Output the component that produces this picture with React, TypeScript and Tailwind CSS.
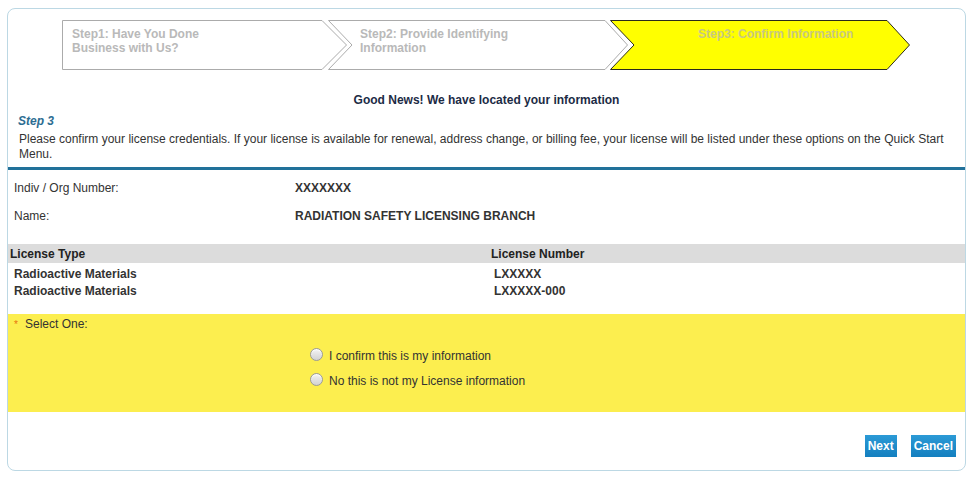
import React from "react";

type Step = {
  label: string[];
  first?: boolean;
  active?: boolean;
  textLeft: string;
  className: string;
};

const steps: Step[] = [
  { label: ["Step1: Have You Done", "Business with Us?"], first: true, textLeft: "pl-[10px]", className: "w-[286px]" },
  { label: ["Step2: Provide Identifying", "Information"], textLeft: "pl-[32px]", className: "w-[301px] -ml-[20px]" },
  { label: ["Step3: Confirm Information"], active: true, textLeft: "pl-[88px]", className: "w-[301px] -ml-[19px]" },
];

function StepShape({ first, active }: { first?: boolean; active?: boolean }) {
  const pts = first
    ? "0.5,0.5 260,0.5 284.5,25 260,49.5 0.5,49.5"
    : "0.5,0.5 277,0.5 299.5,25 277,49.5 0.5,49.5 24,25";
  return (
    <svg className="absolute inset-0" width={first ? 286 : 301} height={51} viewBox={`0 0 ${first ? 286 : 301} 51`}>
      <polygon
        points={pts}
        fill={active ? "#ffff00" : "#ffffff"}
        stroke={active ? "#2b2b1a" : "#ababab"}
        strokeWidth={1}
      />
    </svg>
  );
}

function Radio() {
  return (
    <span className="inline-block w-[13px] h-[13px] rounded-full border border-[#9a9a9a] bg-gradient-to-b from-[#f4f4f4] to-[#d2d2d2] shadow-[inset_0_1px_1px_rgba(255,255,255,0.9)]" />
  );
}

export default function App() {
  return (
    <div className="min-h-[479px] bg-white pt-[8px] pl-[7px] text-[12px] text-[#333] font-['Liberation_Sans',Arial,sans-serif]">
      <div className="w-[959px] h-[463px] border border-[#bcd8e4] rounded-[8px] flex flex-col">
        {/* wizard steps */}
        <div className="flex mt-[11px] ml-[54px] h-[51px]">
          {steps.map((s, i) => (
            <div key={i} className={`relative h-[51px] ${s.className}`}>
              <StepShape first={s.first} active={s.active} />
              <div
                className={`relative pt-[7px] ${s.textLeft} font-bold leading-[14px] ${
                  s.active ? "text-[#c8c882]" : "text-[#b9b9b9]"
                }`}
              >
                {s.label.map((l) => (
                  <div key={l}>{l}</div>
                ))}
              </div>
            </div>
          ))}
        </div>

        <p className="mt-[22px] text-center font-bold leading-[15px] text-[#1c2b45]">
          Good News! We have located your information
        </p>

        <p className="mt-[6px] ml-[10px] italic font-bold leading-[15px] text-[#2d6d92]">Step 3</p>
        <p className="mt-[3px] ml-[11px] mr-[2px] leading-[15px] text-[#333]">
          Please confirm your license credentials. If your license is available for renewal, address change, or billing
          fee, your license will be listed under these options on the Quick Start Menu.
        </p>

        <div className="mt-[5px] h-[3px] bg-[#21719a]" />

        <div className="mt-[4px]">
          <div className="flex items-center h-[28px]">
            <span className="pl-[6px] w-[287px]">Indiv / Org Number:</span>
            <span className="font-bold text-[#333]">XXXXXXX</span>
          </div>
          <div className="flex items-center h-[28px]">
            <span className="pl-[6px] w-[287px]">Name:</span>
            <span className="font-bold text-[#333]">RADIATION SAFETY LICENSING BRANCH</span>
          </div>
        </div>

        <div className="mt-[14px] h-[19px] bg-[#dcdcdc] flex items-center font-bold text-[#222]">
          <span className="pl-[2px] w-[483px]">License Type</span>
          <span>License Number</span>
        </div>
        <div className="pt-[2px]">
          {["LXXXXX", "LXXXXX-000"].map((n) => (
            <div key={n} className="h-[17px] flex items-center font-bold text-[#333]">
              <span className="pl-[6px] w-[486px]">Radioactive Materials</span>
              <span>{n}</span>
            </div>
          ))}
        </div>

        <div className="mt-[15px] h-[98px] bg-[#fcee4f] pt-[3px]">
          <div className="flex items-center leading-[15px] pl-[6px]">
            <span className="text-[#e8740c] text-[10px] w-[11px]">*</span>
            <span>Select One:</span>
          </div>
          <div className="mt-[10px] pl-[302px]">
            {["I confirm this is my information", "No this is not my License information"].map((t) => (
              <label key={t} className="flex items-center h-[25px] gap-[6px]">
                <Radio />
                <span className="pt-[2px]">{t}</span>
              </label>
            ))}
          </div>
        </div>

        <div className="mt-[23px] flex justify-end gap-[14px] pr-[9px]">
          <button className="h-[22px] px-[3px] bg-gradient-to-b from-[#2b9ad6] to-[#137fbf] text-white font-bold text-[12px]">
            Next
          </button>
          <button className="h-[22px] px-[3px] bg-gradient-to-b from-[#2b9ad6] to-[#137fbf] text-white font-bold text-[12px]">
            Cancel
          </button>
        </div>
      </div>
    </div>
  );
}
